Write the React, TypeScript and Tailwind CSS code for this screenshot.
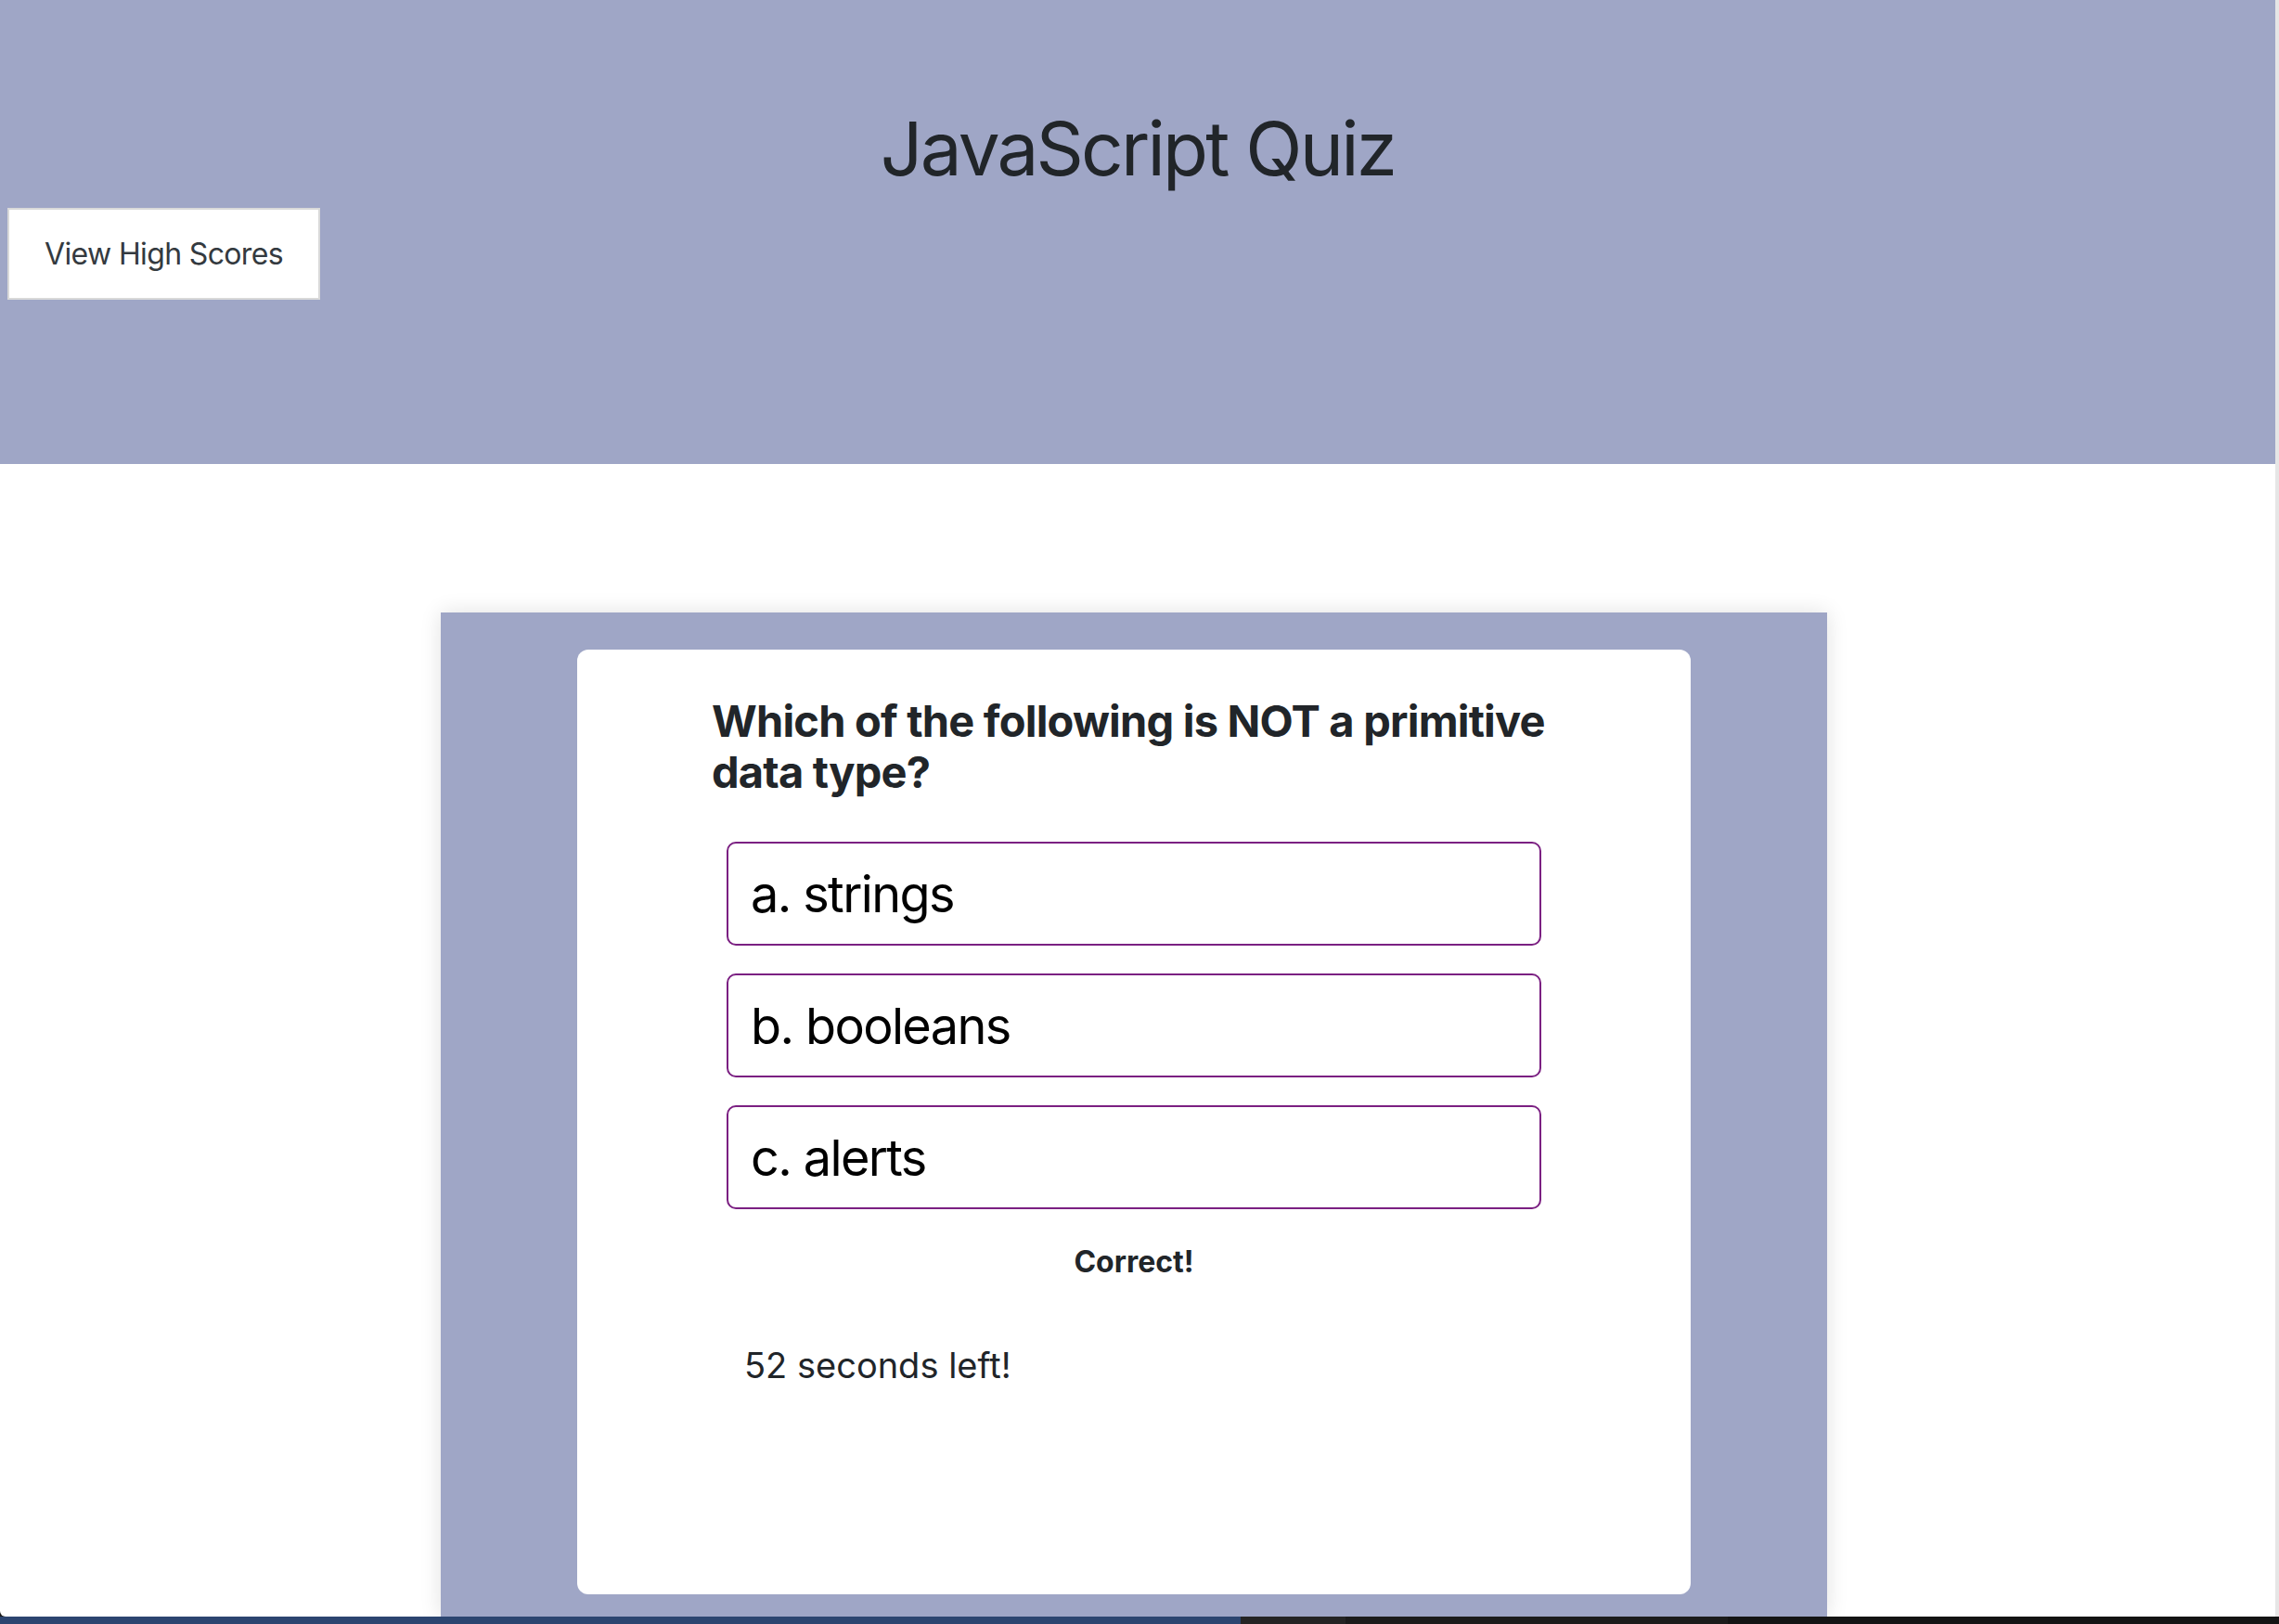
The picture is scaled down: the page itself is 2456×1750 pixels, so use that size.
const options = ["a. strings", "b. booleans", "c. alerts"];

const App = () => {
  return (
    <div className="h-[1750px] w-[2456px] overflow-hidden flex flex-col bg-[#1a1a1a] font-['Inter',sans-serif] text-[#212529]">
      <div className="h-[1742px] flex flex-row rounded-bl-[6px] overflow-hidden bg-white">
        <div className="w-[2452px] flex flex-col">
          <header className="h-[500px] bg-[#9fa6c6] pt-[112px] flex flex-col">
            <h1 className="text-[80px] leading-[96px] text-center tracking-[-0.035em] font-normal">
              JavaScript Quiz
            </h1>
            <div className="mt-[16px] pl-[8px]">
              <button className="w-[337px] h-[99px] bg-white border-2 border-[#d9d9d9] text-[32px] text-[#343a40] tracking-[-0.02em]">
                View High Scores
              </button>
            </div>
          </header>

          <main className="flex-1 pt-[160px] pr-[8px] flex justify-center">
            <section className="w-[1494px] bg-[#9fa6c6] pt-[40px] px-[147px] shadow-[0_0_22px_rgba(0,0,0,0.12)]">
              <div className="h-[1018px] bg-white rounded-[12px] pt-[49px] flex flex-col">
                <h2 className="ml-[145px] w-[930px] text-[47px] leading-[55px] font-bold tracking-[-0.8px]">
                  Which of the following is NOT a primitive data type?
                </h2>
                <div className="ml-[161px] w-[878px] mt-[48px] flex flex-col gap-[30px]">
                  {options.map((opt) => (
                    <button
                      key={opt}
                      className="h-[112px] border-2 border-[#7b2082] rounded-[10px] pl-[24px] flex items-center text-[54px] text-black tracking-[-0.03em] bg-white text-left"
                    >
                      {opt}
                    </button>
                  ))}
                </div>
                <p className="ml-[161px] w-[878px] mt-[39px] text-[32px] leading-[36px] font-bold text-center">
                  Correct!
                </p>
                <p className="ml-[180px] mt-[70px] text-[38px] leading-[46px]">52 seconds left!</p>
              </div>
            </section>
          </main>
        </div>
        <div className="w-[4px] bg-[#e6e6e6]" />
      </div>
      <div className="h-[8px] flex flex-row">
        <div className="w-[1337px] bg-[#2c4570]" />
        <div className="w-[113px] bg-[#242424]" />
        <div className="w-[412px] bg-[#1b1b1b]" />
        <div className="flex-1 bg-[#141414]" />
      </div>
    </div>
  );
};

export default App;
